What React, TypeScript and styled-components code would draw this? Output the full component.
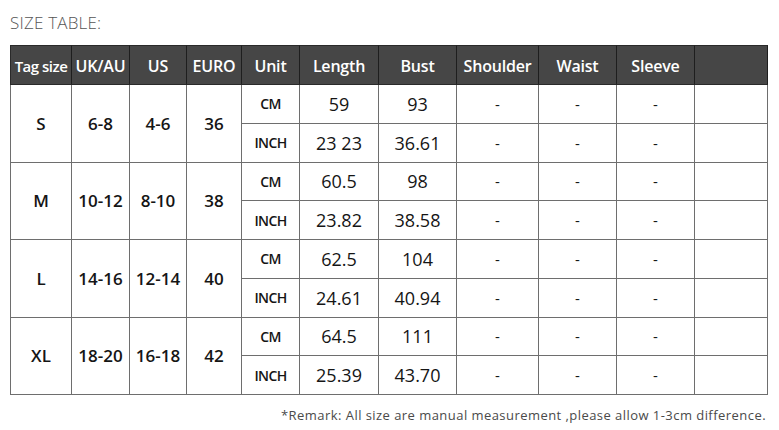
import React from 'react'
import styled, { createGlobalStyle } from 'styled-components'

const GlobalStyle = createGlobalStyle`
    html, body {
        margin: 0;
        padding: 0;
        background: #ffffff;
    }
    body {
        font-family: 'Open Sans', Lato, 'Liberation Sans', sans-serif;
    }
`

// ============================================================================
// STYLED COMPONENTS
// ============================================================================

const Page = styled.div`
    width: 779px;
    height: 430px;
    padding: 13px 0 0 10px;
    box-sizing: border-box;
    background: #ffffff;
`

const Title = styled.div`
    font-family: 'Open Sans', Lato, sans-serif;
    font-weight: 300;
    font-size: 17px;
    letter-spacing: 0.2px;
    color: #555555;
    line-height: 20px;
    height: 32px;
`

const Table = styled.div`
    display: grid;
    grid-template-columns: 62px 58px 57px 55px 58px 79px 78px 82px 78px 78px 73px;
    grid-template-rows: 40px repeat(8, 38.75px);
    width: 758px;
`

const HeadCell = styled.div<{ $first?: boolean }>`
    background: #464646;
    color: #ffffff;
    font-weight: 600;
    font-size: ${({ $first }) => ($first ? 15 : 16)}px;
    letter-spacing: ${({ $first }) => ($first ? -0.5 : -0.2)}px;
    display: flex;
    align-items: center;
    justify-content: center;
    border-top: 1px solid #2a2a2a;
    border-bottom: 1px solid #2a2a2a;
    border-right: 1px solid #1e1e1e;
    border-left: ${({ $first }) => ($first ? '1px solid #2a2a2a' : 'none')};
    padding-top: 1px;
    box-sizing: border-box;
    white-space: nowrap;
`

const Cell = styled.div<{ $first?: boolean; $span?: number; $size?: number; $weight?: number; $track?: number }>`
    grid-row: ${({ $span }) => ($span ? `span ${$span}` : 'auto')};
    display: flex;
    align-items: center;
    justify-content: center;
    color: #151515;
    font-size: ${({ $size }) => $size ?? 18}px;
    font-weight: ${({ $weight }) => $weight ?? 400};
    letter-spacing: ${({ $track }) => $track ?? 0}px;
    border-right: 1px solid #6e6e6e;
    border-bottom: 1px solid #6e6e6e;
    border-left: ${({ $first }) => ($first ? '1px solid #6e6e6e' : 'none')};
    box-sizing: border-box;
    white-space: nowrap;
`

const Remark = styled.div`
    width: 756px;
    text-align: right;
    font-size: 13px;
    letter-spacing: 0.45px;
    color: #4a4a4a;
    margin-top: 11px;
`

// ============================================================================
// DATA
// ============================================================================

const headers = ['Tag size', 'UK/AU', 'US', 'EURO', 'Unit', 'Length', 'Bust', 'Shoulder', 'Waist', 'Sleeve', '']

const sizes = [
    { tag: 'S', uk: '6-8', us: '4-6', euro: '36', cm: ['59', '93'], inch: ['23 23', '36.61'] },
    { tag: 'M', uk: '10-12', us: '8-10', euro: '38', cm: ['60.5', '98'], inch: ['23.82', '38.58'] },
    { tag: 'L', uk: '14-16', us: '12-14', euro: '40', cm: ['62.5', '104'], inch: ['24.61', '40.94'] },
    { tag: 'XL', uk: '18-20', us: '16-18', euro: '42', cm: ['64.5', '111'], inch: ['25.39', '43.70'] },
]

// ============================================================================
// COMPONENT
// ============================================================================

const MeasureRow: React.FC<{ unit: string; values: string[] }> = ({ unit, values }) => (
    <>
        <Cell $size={14} $weight={600} $track={-0.6}>{unit}</Cell>
        <Cell>{values[0]}</Cell>
        <Cell>{values[1]}</Cell>
        <Cell $size={15}>-</Cell>
        <Cell $size={15}>-</Cell>
        <Cell $size={15}>-</Cell>
        <Cell />
    </>
)

const App: React.FC = () => (
    <Page>
        <GlobalStyle />
        <Title>SIZE TABLE:</Title>
        <Table>
            {headers.map((h, i) => (
                <HeadCell key={i} $first={i === 0}>{h}</HeadCell>
            ))}
            {sizes.map((s) => (
                <React.Fragment key={s.tag}>
                    <Cell $first $span={2} $size={17} $weight={600}>{s.tag}</Cell>
                    <Cell $span={2} $weight={600} $size={17}>{s.uk}</Cell>
                    <Cell $span={2} $weight={600} $size={17}>{s.us}</Cell>
                    <Cell $span={2} $weight={600} $size={17}>{s.euro}</Cell>
                    <MeasureRow unit="CM" values={s.cm} />
                    <MeasureRow unit="INCH" values={s.inch} />
                </React.Fragment>
            ))}
        </Table>
        <Remark>*Remark: All size are manual measurement ,please allow 1-3cm difference.</Remark>
    </Page>
)

export default App
